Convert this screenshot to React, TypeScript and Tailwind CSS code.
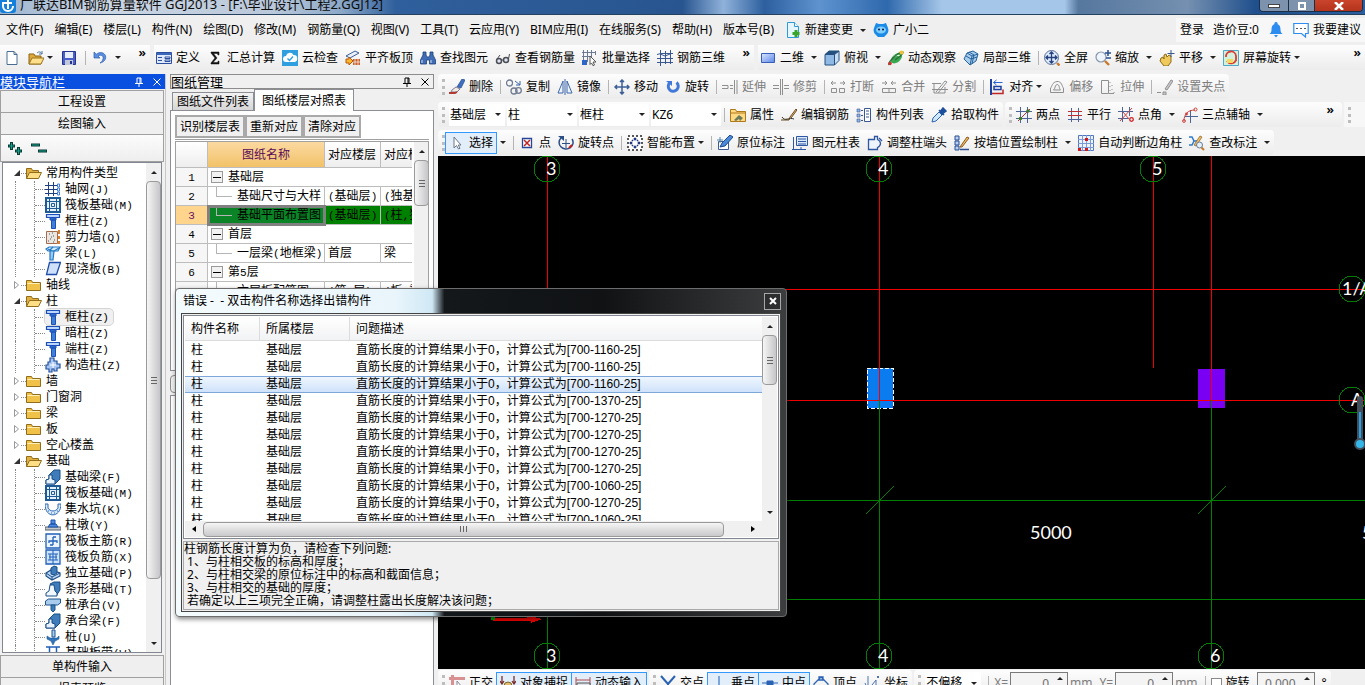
import type { ReactNode } from "react";

const NAVY = "#1f3f86";
const BLUE = "#3f7fd6";
const GREY = "#8f8f8f";

const icons: Record<string, ReactNode> = {
  file: <path d="M3 1.5h7l3 3v10H3zM10 1.5v3h3" fill="#fff" stroke="#4a6c92" />,
  open: (
    <>
      <path d="M1 14V4h5l1 2h6v8z" fill="#e0a93a" stroke="#8a6414" />
      <path d="M1 14l3-6h12l-3 6z" fill="#ffe08a" stroke="#9a7420" />
      <path d="M9 3c2-2 4-1 5 1m0-3v3h-3" fill="none" stroke="#4d74a0" />
    </>
  ),
  save: (
    <>
      <path d="M1.500 1.500h13v13h-13z" fill="#4a5fc8" stroke="#28358c" />
      <path d="M4 2h8v6H4z" fill="#e9eefc" />
      <path d="M4 10h8v5H4z" fill="#c3c9da" />
      <path d="M9 11h2v3H9z" fill="#28358c" />
    </>
  ),
  undo: <path d="M2 2v6h6L6 6c3-2 6 0 5 3-.4 1.700-1.500 3-3 4 4-.8 6.500-4 5.500-7C12.500 2.500 8 1.300 4.300 4.200z" fill="#5b8ee0" stroke="#2c5bb0" strokeWidth=".7" />,
  define: (
    <>
      <path d="M.5 2.500h15v11H.5z" fill="#dfe9fb" stroke="#2b4f9c" />
      <path d="M.5 3h15v2H.5z" fill="#3d66bd" />
      <path d="M2 7.500h4M2 10.500h4" stroke="#2b4f9c" />
      <path d="M9 7h5v1.500H9zM9 10h5v1.500H9z" fill="#fff" stroke="#2b4f9c" />
    </>
  ),
  sigma: <path d="M4 2h8v3h-1l-.6-1.500H6.500L10 8l-4 4.500h4.500L11.300 11H12v3H4v-1l4-5-4-5z" fill="#111" stroke="#111" strokeWidth=".5" />,
  cloud: (
    <>
      <path d="M0 0h16v16H0z" fill="#2f9fe0" />
      <path d="M4 12a3 3 0 010-6 4 4 0 017.500-1A3.500 3.500 0 0112 12z" fill="#fff" />
      <path d="M5.500 8.500l2 2 3.500-4" fill="none" stroke="#2f9fe0" strokeWidth="1.400" />
    </>
  ),
  slab: (
    <>
      <path d="M1 6l9-5 4 2-9 5z" fill="#e9f0fa" stroke="#3b5f9a" />
      <path d="M1 9h3V7l4 4-4 4v-2H1z" fill="#ffb52e" stroke="#b05a10" />
      <path d="M8 9h7v6H8z" fill="#c8602c" />
      <path d="M10 9v6M13 9v6M8 12h7" stroke="#fff" strokeWidth=".7" />
    </>
  ),
  find: (
    <>
      <path d="M3 2h3v3l1 2h2l1-2V2h3v3l2.500 5v4H9.500v-4h-3v4H.5v-4L3 5z" fill="#3f6cb4" stroke="#1d3f7c" strokeWidth=".8" />
      <path d="M2 10v3M11 10v3" stroke="#cfe0fa" />
    </>
  ),
  glasses: (
    <>
      <circle cx="4" cy="11" r="2.500" fill="#dce6f2" stroke="#4c4c55" strokeWidth="1.500" />
      <circle cx="11" cy="10" r="2.500" fill="#dce6f2" stroke="#4c4c55" strokeWidth="1.500" />
      <path d="M6.500 10h2M2 9l3-4M13.500 9l1-5" stroke="#4c4c55" fill="none" />
    </>
  ),
  batch: (
    <>
      <path d="M1.500 0v12M5.500 0v12M9.500 0v7M0 2.500h14M0 6.500h8M13.500 1v4" stroke="#6e7a90" fill="none" />
      <path d="M0 10h5v5H0z" fill="#2f64c8" />
      <path d="M8 6l6 6h-3l1.500 3-1.500.7L9.500 13 8 14.500z" fill="#fff" stroke="#555" />
    </>
  ),
  rebar3d: <path d="M3.500 0v16M8.500 1v13M13.500 0v14M0 4.500l4-1h12M0 8.500h16M0 12.500h16M3 4l5 2 5-2" stroke="#39588f" fill="none" />,
  rect: (
    <>
      <defs>
        <linearGradient id="rectFill" x1="0" x2="1" y2="1">
          <stop stopColor="#dbe6ff" />
          <stop offset="1" stopColor="#5b86e8" />
        </linearGradient>
      </defs>
      <path d="M1.500 3.500h13v9h-13z" fill="url(#rectFill)" stroke="#3660b8" />
    </>
  ),
  cube: (
    <>
      <path d="M1 4.500h9.500V15H1z" fill="#8fb8e4" stroke="#24507f" />
      <path d="M1 4.500L5 1h10l-4.500 3.500z" fill="#24507f" stroke="#24507f" />
      <path d="M10.500 4.500L15 1v9.500L10.500 15z" fill="#c9def4" stroke="#24507f" />
    </>
  ),
  orbit: (
    <>
      <path d="M3 12C2 8 7 2 12 3c2 1 3 3 1 6-2 4-8 6-10 3z" fill="#39a850" />
      <path d="M6 7c2-2 4-2 6-1" stroke="#d9ffd0" fill="none" strokeWidth="1.500" />
      <path d="M1 15C-1 12 12 1 15 2c1 2-5 6-8 8" stroke="#2d6b38" fill="none" strokeWidth="1.300" />
      <circle cx="13.500" cy="2.500" r="2" fill="#f2c230" />
      <circle cx="2" cy="13.500" r="1.800" fill="#c33" />
    </>
  ),
  local3d: (
    <>
      <path d="M1 9l3-6 6-2 5 3-2 7-6 4z" fill="#a9cdec" stroke="#27639c" />
      <path d="M4 3l5 3 6-2M9 6l-2 9M3 6l5 3 6-2M6 2l5 3-2 9" stroke="#27639c" fill="none" />
    </>
  ),
  full: (
    <>
      <circle cx="7.500" cy="7.500" r="7" fill="#dcebff" stroke="#5c6f92" />
      <path d="M7.500 2v11M2 7.500h11M5.500 4l2-2 2 2M5.500 11l2 2 2-2M4 5.500l-2 2 2 2M11 5.500l2 2-2 2" stroke="#24407c" fill="none" strokeWidth="1.300" />
      <path d="M13 13l2.500 2.500" stroke="#c67a2a" strokeWidth="2.400" />
    </>
  ),
  zoom: (
    <>
      <circle cx="6" cy="7" r="5" fill="#eef5ff" stroke="#8795ab" strokeWidth="1.200" />
      <path d="M10 11l4 4" stroke="#c67a2a" strokeWidth="2.400" />
      <path d="M13 0v6M10 3h6M11 8h5" stroke="#28508f" strokeWidth="1.500" />
    </>
  ),
  pan: (
    <>
      <path d="M2 8l2-1 1 2V5l2-1 1 3 2-2 2 1v6l-3 4H5l-4-5z" fill="#f0c95c" stroke="#8d6a1a" />
      <path d="M12 0v7M8.500 3.500h7" stroke="#39588f" />
    </>
  ),
  screenRotate: (
    <>
      <path d="M.5.5h15v15H.5z" fill="#d3f0dc" stroke="#4da9c8" />
      <path d="M3 7a5 5 0 0110-1v5M13 10a5 5 0 01-9 1" stroke="#dc3a34" strokeWidth="1.800" fill="none" />
      <path d="M4 9h6v4H4z" fill="#f4d860" />
    </>
  ),
  erase: (
    <>
      <path d="M8 8l5-8 3 1-4 8z" fill="#3f70c0" stroke="#234a8c" strokeWidth=".7" />
      <path d="M3 11l4-3 4 2-3 3H2z" fill="#f3ece0" stroke="#7c7a9a" />
      <path d="M0 14h6l2-1" stroke="#b23a2e" strokeWidth="1.800" fill="none" />
    </>
  ),
  copy: (
    <>
      <circle cx="3.500" cy="4" r="3" fill="none" stroke="#707c92" strokeWidth="1.300" />
      <circle cx="8" cy="12" r="3" fill="none" stroke="#707c92" strokeWidth="1.300" />
      <circle cx="12.500" cy="11.500" r="2.800" fill="none" stroke="#707c92" strokeWidth="1.300" />
      <path d="M9 2l5 4m0-4v4h-4" fill="none" stroke="#3a62a8" />
    </>
  ),
  mirror: <path d="M6 2v12H1zM10 2v12h5zM8 0v16" fill="#eef4ff" stroke="#3d66a8" />,
  move: <path d="M8 1v14M1 8h14M6 3l2-2 2 2M6 13l2 2 2-2M3 6L1 8l2 2M13 6l2 2-2 2" fill="none" stroke="#3c5f96" strokeWidth="1.500" />,
  rotate: (
    <>
      <path d="M4.500 4a5 5 0 107-.5" fill="none" stroke="#4279d8" strokeWidth="3" />
      <path d="M1 2h6v5z" fill="#4279d8" />
    </>
  ),
  extend: <path d="M0 6.500h6v3H0M8 6.500h3M8 9.500h3M12.500 1v14M15 1v14" stroke={GREY} fill="none" />,
  trim: <path d="M0 6.500h6M0 9.500h6M7.500 0v16M9.500 0v16M11 6.500h5M11 9.500h5" stroke={GREY} fill="none" />,
  breakIt: <path d="M1 4h5M1 4l2-2M1 4l2 2M10 4h5l-2-2M15 4l-2 2M1.500 9.500h5v4h-5zM9.500 9.500h5v4h-5z" stroke={GREY} fill="none" />,
  join: <path d="M1 4h5L4 2m2 2L4 6M15 4h-5l2-2m-2 2l2 2M1.500 9.500h13v4h-13zM8 10v3" stroke={GREY} fill="none" />,
  split: <path d="M0 4.500h9M0 10.500h16M2 4v10h11V8M4 13l9-11 2 1-9 11" stroke={GREY} fill="none" />,
  align: (
    <>
      <path d="M1 0h2v16H1z" fill="#1c3fa0" />
      <path d="M4.500 3.500h9M4.500 3.500l3-2.500M4.500 3.500l3 2.500" stroke="#2b62d8" fill="none" />
      <path d="M5 7.500h7v3H5z" fill="#fff" stroke="#1c3fa0" strokeWidth="1.500" />
      <path d="M3 14.500h11v-4" stroke="#c02424" strokeWidth="1.500" fill="none" />
    </>
  ),
  offset: <path d="M1.500 13.500V9C3 8 3 3 8 2.500S13 8 14.500 9v4.500zM4.500 11c2-1 1-5 3.500-5.500S10 10 11.500 11z" stroke={GREY} fill="none" />,
  stretch: <path d="M1.500 1.500h7v13h-7zM10 3v1M10 7v1M10 11v1M12 6v1M12 10v1M14 13v1M9 14.500h5" stroke={GREY} fill="none" />,
  grip: <path d="M0 13.500h4M6 13h3v3H6zM8 10l6-9 2 1-6 9z" stroke={GREY} fill="#c9c9c9" />,
  props: (
    <>
      <path d="M.5 2.500h5l1 2h9v10H.5z" fill="#ffd984" stroke="#b07818" />
      <path d="M.5 6h15" stroke="#b07818" />
      <path d="M4 13l5-5 4 3-3 3-1-2-3 2z" fill="#6a7a5a" />
    </>
  ),
  pencil: (
    <>
      <path d="M0 13h8l1-3 6-8 1 1-6 8" stroke="#6a4b2a" fill="#f0c060" />
      <path d="M1 10c3 5 7 0 12 2" stroke="#333" fill="none" />
    </>
  ),
  list: (
    <>
      <path d="M8.500 1.500h6v13h-6z" fill="#fff" stroke="#39588f" />
      <path d="M10 4h3M10 7h3M10 10h3" stroke="#39588f" />
      <path d="M1 2h3v3H1zM1 7h3v3H1zM1 12h3v3H1z" fill="#8fb4e8" stroke="#39588f" strokeWidth=".6" />
      <path d="M5 3.500h2M5 8.500h2M5 13.500h2" stroke="#39588f" />
    </>
  ),
  picker: (
    <>
      <path d="M1 15l1-4 6-6 3 3-6 6z" fill="#cfe6ff" stroke="#2d66b0" />
      <path d="M8 3l5 5M9 5l3-4 3 3-4 3z" fill="#1e4f9c" stroke="#1e4f9c" strokeWidth="1.500" />
    </>
  ),
  twoPoint: (
    <>
      <path d="M0 4.500h16M0 11.500h16M4.500 0v16M11.500 0v16" stroke="#4d6498" />
      <path d="M2 14L14 2" stroke="#c03030" />
      <circle cx="4.500" cy="11.500" r="1.800" fill="#3a7a2a" />
      <circle cx="12" cy="4" r="1.800" fill="#3a7a2a" />
    </>
  ),
  parallel: (
    <>
      <path d="M4.500 1v14M11.500 1v14M1 12.500h14" stroke="#4d6498" />
      <path d="M1 4.500h14M1 8.500h14" stroke="#c03030" />
    </>
  ),
  angle: (
    <>
      <path d="M0 4.500h15M0 11.500h10M4.500 0v15M11.500 0v9" stroke="#4d6498" />
      <path d="M2 14L14 1M5 5l6 7" stroke="#d04040" />
      <circle cx="13.500" cy="12.500" r="1.800" fill="none" stroke="#d02020" strokeWidth="1.300" />
    </>
  ),
  arc: (
    <>
      <path d="M8.500 3v13M3 9.500h13" stroke="#4d6498" />
      <path d="M2 14C2 7 6 3 13 3" stroke="#d04040" fill="none" />
      <circle cx="2" cy="14" r="1.400" fill="none" stroke="#d04040" />
      <circle cx="13.500" cy="2.500" r="1.500" fill="none" stroke="#d04040" />
      <circle cx="4.500" cy="7" r="1.400" fill="#d04040" />
    </>
  ),
  cursor: <path d="M5 2v11l2.500-2.500L9.500 14l1.500-.7L9.300 10H12z" fill="#fff" stroke="#6a7788" />,
  point: (
    <>
      <path d="M3.500 3.500h9v9h-9z" fill="#fff" stroke="#26469a" strokeWidth="1.300" />
      <path d="M5 5l6 6M11 5l-6 6" stroke="#c02020" strokeWidth="1.500" />
    </>
  ),
  rotPoint: (
    <>
      <path d="M3 3a7 6.500 0 1011 1" fill="none" stroke="#2c4f86" strokeWidth="1.500" />
      <path d="M0 1l6 0v5z" fill="#2c4f86" />
      <path d="M8 4v9M4 8.500h8" stroke="#2c4f86" />
      <path d="M11 13l3-3" stroke="#c02020" strokeWidth="2" />
    </>
  ),
  smart: (
    <>
      <path d="M1 1h14v14H1z" fill="#fff" stroke="#222" strokeDasharray="2 2" strokeWidth="1.500" />
      <path d="M5 5h1v1H5zM10 5h1v1h-1zM5 10h1v1H5zM10 10h1v1h-1zM7 3h2v2H7zM7 11h2v2H7zM3 7h2v2H3zM11 7h2v2h-2z" fill="#223b80" stroke="#223b80" strokeWidth=".6" />
    </>
  ),
  mark: (
    <>
      <path d="M1.500 6.500h10v8h-10z" fill="#fff" stroke="#3c5c94" />
      <path d="M3 12l2-4 8-8 3 2-8 9z" fill="#4a8ad8" stroke="#1f4a8c" />
      <path d="M0 5h6M3 2v6" stroke="#58a" />
    </>
  ),
  chart: (
    <>
      <path d="M4.500 1.500h11v9h-11z" fill="#dce9fb" stroke="#2f56a0" />
      <path d="M6 4h8M6 6.500h8M6 9h8" stroke="#2f56a0" />
      <path d="M1.500 2v12M0 14.500h14M9 12v3" stroke="#2f56a0" />
    </>
  ),
  adjust: <path d="M1.500 4.500h6v-3h3v3c4 2 4 6 0 8v2h-9zM12 3l3 3" fill="#eef4ff" stroke="#2f56a0" strokeWidth="1.300" />,
  wall: (
    <>
      <path d="M1 1h4v4H1zM1 6h4v4H1zM1 11h4v4H1z" fill="#b8d0f4" stroke="#2b4f90" />
      <path d="M6 14.500h9" stroke="#2b4f90" strokeWidth="1.500" />
      <path d="M6 12l7-10 2 1-7 9z" fill="#f0c060" stroke="#8a5a20" />
    </>
  ),
  corner: (
    <>
      <path d="M.5.5h15v15H.5z" fill="#eef4ff" stroke="#5076c0" />
      <path d="M4.500 0v16M8.500 0v16M12.500 0v16M0 4.500h16M0 8.500h16M0 12.500h16" stroke="#7c9ad4" />
      <path d="M7 3h3v3H7zM0 13h3v3H0zM7 13h3v3H7z" fill="#d01818" />
    </>
  ),
  review: (
    <>
      <path d="M0 2h3l2 4-2 4H0M4 6h5" stroke="#2f7acc" strokeWidth="1.500" fill="none" />
      <path d="M5 10l6-9 2 1-6 9z" fill="#f0c060" stroke="#8a5a20" strokeWidth=".7" />
      <circle cx="10.500" cy="10" r="3" fill="#e5f0ff" stroke="#6a7a90" />
      <path d="M12.500 12.500L15 15" stroke="#c67a2a" strokeWidth="2" />
    </>
  ),
  newChange: (
    <>
      <path d="M2.500.5h7l4 4v11h-11z" fill="#e6f6ff" stroke="#2d9bd8" />
      <path d="M9.500.5v4h4" fill="#fff" stroke="#2d9bd8" />
      <path d="M11 8v7M7.500 11.500h7" stroke="#37a52c" strokeWidth="3" />
    </>
  ),
  mascot: (
    <>
      <path d="M1 6l2-5 3 1h4l3-1 2 5c1 2 0 5-1 6l-3 3H5l-3-3C1 11 0 8 1 6z" fill="#1c8be8" />
      <ellipse cx="8" cy="8" rx="5" ry="3.500" fill="#7fd0ff" />
      <circle cx="6" cy="7.500" r="1" fill="#114" />
      <circle cx="10" cy="7.500" r="1" fill="#114" />
    </>
  ),
  bell: <path d="M8 0a1.500 1.500 0 011.400 2C12 3 12.500 5 12.500 8c0 2 1 3 2 4H1.500c1-1 2-2 2-4 0-3 .5-5 3-6A1.500 1.500 0 018 0zM6 13h4l-2 2.500z" fill="#2d8cf0" />,
  chat: (
    <>
      <path d="M.8 1.500h14.400v10h-2.700v3.500l-4-3.500H.8z" fill="#fff" stroke="#2d8cf0" strokeWidth="1.200" />
      <path d="M3 6.500h2M7 6.500h2M11 6.500h2" stroke="#555" />
    </>
  ),
  folder: (
    <>
      <path d="M.5 13.500v-10h5l1 2h8v8z" fill="#f1c24a" stroke="#8f6d1c" />
      <path d="M1.500 6.500h12" stroke="#fff0b8" />
    </>
  ),
  folderOpen: (
    <>
      <path d="M.5 13.500v-10h5l1 2h6v2" fill="#e2b040" stroke="#8f6d1c" />
      <path d="M.5 13.500l3-6h12l-3 6z" fill="#ffdf86" stroke="#8f6d1c" />
    </>
  ),
  axisGrid: (
    <>
      <path d="M3.500 1v14M8.500 1v14M0 4.500h12M0 8.500h12M0 12.500h12" stroke={NAVY} />
      <path d="M12.500 3h2v3h-2zM12.500 7h2v3h-2zM12.500 11h2v3h-2z" fill="#fff" stroke={BLUE} />
    </>
  ),
  raft: (
    <>
      <path d="M1 1h14v14H1z" fill="#e4f0fb" stroke="#1d5a96" strokeWidth="2" />
      <path d="M4.500 1v14M11.500 1v14M1 4.500h14M1 11.500h14M6.500 6.500h3v3h-3z" fill="none" stroke="#1d5a96" />
    </>
  ),
  column: (
    <>
      <path d="M1.500 1.500h13v3h-13z" fill="#bcd6ff" stroke="#1c50b8" strokeWidth="1.200" />
      <path d="M5 5h6v2H5zM6.500 7h4v8.500h-4z" fill={BLUE} stroke="#1c50b8" />
    </>
  ),
  shear: (
    <>
      <path d="M1.500 2.500h11v12h-11z" fill="#e9e6e2" stroke="#a56a4a" />
      <path d="M4 5h1M8 7h1M5 10h1M9 11h1M7 4h1M3 12h1M6 8h1M8 13h1" stroke="#555" />
      <path d="M14 1v4M14 7v3M14 12v3" stroke="#d98030" strokeWidth="2" />
    </>
  ),
  beam: (
    <>
      <path d="M1 4l3-2h11l-2 4H3z" fill="#d5ecff" stroke="#2378c4" strokeWidth="1.200" />
      <path d="M5 6h4l-1 9H5zM9 6l5-3M3 4l4 2M8 2L5 5" fill="#9accf4" stroke="#2378c4" strokeWidth="1.200" />
    </>
  ),
  plate: <path d="M4.500 1.500h11l-4 12H1.500z" fill="#cfe0fb" stroke="#1f4ea8" strokeWidth="1.300" />,
  gear: (
    <>
      <path d="M5 1h4v3h3v3h3v4h-3v3H9v-2H7v3H4v-3H1V8h2V5h2z" fill="#a9c6f2" stroke="#23509c" strokeWidth="1.200" />
      <path d="M8 5v6M5 8h6" stroke="#fff" />
    </>
  ),
  footBeam: (
    <>
      <path d="M1 15v-4l3-1V6l5-5h6v9l-5 5z" fill="#3e7cba" stroke="#1a4f86" />
      <path d="M1 15v-4l3-1V6h3v4l3 1v4z" fill="#e5f1ff" stroke="#1a4f86" />
    </>
  ),
  pit: (
    <>
      <path d="M0 3h3v4c2 4 8 4 10 0V3h3c0 14-16 15-16 0z" fill="#d7eaff" stroke="#2c69b0" />
      <path d="M3 10h1M6 12h1M9 12h1M12 10h1" stroke="#2c69b0" />
    </>
  ),
  pier: (
    <>
      <path d="M0 10h16v3H0z" fill="#c4c8ce" stroke="#56606c" />
      <path d="M3 10l2-3h6l2 3zM6 3h4v4H6z" fill="#4d8be0" stroke="#1c50a8" />
    </>
  ),
  mainBar: (
    <>
      <path d="M1 1h14v14H1z" fill="#eaf3ff" stroke="#2160b8" strokeWidth="1.300" />
      <path d="M8 4v8M4 10V8h8v2M8 4h3M5 12h3" fill="none" stroke="#2160b8" strokeWidth="1.300" />
    </>
  ),
  negBar: (
    <>
      <path d="M1 1h14v14H1z" fill="#cfe2fb" stroke="#2160b8" strokeWidth="1.300" />
      <path d="M8 1v14M3 5h10M3 11h10M5 5v6M11 5v6M4 8h8" fill="none" stroke="#2160b8" />
    </>
  ),
  pad: (
    <>
      <path d="M1 8l5-3 9 3v3l-8 4-6-4z" fill="#bcd8f4" stroke="#1d4f88" strokeWidth="1.200" />
      <path d="M1 8l6 4 8-4M7 12v3" fill="none" stroke="#1d4f88" />
      <path d="M6 3l3-2 3 1v6l-3 2-3-1z" fill="#3e7cba" stroke="#1d4f88" />
    </>
  ),
  strip: (
    <>
      <path d="M5 3l4-2h6v8l-4 6z" fill="#3e7cba" stroke="#1a4f86" />
      <path d="M1 15v-3l3-2 1-6h4l1 6 2 2v3z" fill="#f2f8ff" stroke="#1a4f86" />
    </>
  ),
  cap: (
    <>
      <path d="M.5 4l3-2h12v4l-3 2H.5z" fill="#a9ccec" stroke="#1d5590" />
      <path d="M6 8h4v5l-2 2-2-2z" fill="#3e7cba" stroke="#1d5590" />
    </>
  ),
  pile: (
    <>
      <path d="M7 1h3v7H7z" fill="#a9ccec" stroke="#1d5590" />
      <path d="M2 7l3 2h7l2-2v3l-4 2-2 4-2-4-4-2z" fill="#2f74bc" stroke="#1d5590" strokeWidth=".6" />
    </>
  ),
  band: <path d="M1 2h14M1 8h14M4.500 2v12M11.500 2v12" fill="none" stroke="#2160b8" strokeWidth="1.500" />,
  ortho: (
    <>
      <path d="M3.500 0v15M0 3.500h16" stroke="#d99090" strokeWidth="3" />
      <path d="M8 6v8l5-2z" fill="#fff" stroke="#889" />
    </>
  ),
  snap: (
    <>
      <path d="M2 1v7M14 1v7M0 6l2 3 2-3M12 6l2 3 2-3" stroke="#7a2e2e" fill="none" strokeWidth="1.300" />
      <circle cx="8" cy="11" r="4" fill="#e0bd70" stroke="#7f6a2a" />
    </>
  ),
  dyn: (
    <>
      <path d="M1 2v13M1 5h14M15 2v13" stroke="#b04a4a" />
      <path d="M2 8h13v7H2z" fill="#dfe4ea" stroke="#555" />
    </>
  ),
  cross: <path d="M1 1l7 8 7-8M8 9v7" stroke="#2a62b4" fill="none" strokeWidth="2" />,
  perp: <path d="M8 1v13M1 14h14" stroke="#7ba6dc" fill="none" strokeWidth="2" />,
  mid: <path d="M0 8h16M5 6h6v5H5z" stroke="#2a62b4" fill="#2a62b4" />,
  vertex: <path d="M1 14V9l7-7 7 7v5M6 2h4v3H6z" stroke="#2a62b4" fill="none" strokeWidth="1.300" />,
  coord: <path d="M1 8l3 7M4 1v14l8-10v10M13 1l2 2M15 1l-2 2" stroke="#4d74b8" fill="none" />,
};

function Icon({ name }: { name: string }) {
  return (
    <svg viewBox="0 0 16 16" className="size-4 shrink-0" aria-hidden="true">
      {icons[name]}
    </svg>
  );
}

function Triangle({ up = false }: { up?: boolean }) {
  return (
    <svg viewBox="0 0 6 3" className="h-[3px] w-1.5 shrink-0" aria-hidden="true">
      <path d={up ? "M0 3h6L3 0z" : "M0 0h6L3 3z"} fill="#222" />
    </svg>
  );
}

type ToolProps = {
  icon?: string;
  children?: ReactNode;
  arrow?: boolean;
  tight?: boolean;
  disabled?: boolean;
  active?: boolean;
  label?: string;
};

function Tool({ icon, children, arrow, tight, disabled, active, label }: ToolProps) {
  return (
    <span className={tight ? "flex shrink-0 items-center gap-[3px]" : "flex shrink-0 items-center gap-[7px]"}>
      <button
        type="button"
        aria-label={label}
        disabled={disabled}
        className={
          active
            ? "-mx-1 flex h-[22px] items-center gap-1 whitespace-nowrap border border-[#3399ff] bg-[#e3eefb] px-[3px]"
            : "flex h-[22px] items-center gap-1 whitespace-nowrap disabled:text-[#7d7d7d]"
        }
      >
        {icon && <Icon name={icon} />}
        {children}
      </button>
      {arrow && <Triangle />}
    </span>
  );
}

function Sep() {
  return <span className="-mr-0.5 h-[14px] w-px shrink-0 bg-[#b4b4b4]" />;
}

function Grip() {
  return <span className="-mr-[3px] h-4 w-[3px] shrink-0 border-l-[3px] border-dotted border-[#bdbdbd]" />;
}

function More() {
  return <span className="ml-auto self-start pr-1 text-[13px] leading-[14px] font-semibold">»</span>;
}

function Group({ children, grow }: { children: ReactNode; grow?: boolean }) {
  return (
    <div
      className={
        grow
          ? "flex h-full min-w-0 flex-1 items-center gap-[7px] rounded-sm bg-linear-to-b from-[#fdfdfd] to-[#ececec] px-1"
          : "flex h-full shrink-0 items-center gap-[7px] rounded-sm bg-linear-to-b from-[#fdfdfd] to-[#ececec] px-1"
      }
    >
      {children}
    </div>
  );
}

function Combo({ value, label, first }: { value: string; label: string; first?: boolean }) {
  return (
    <span className={first ? "flex h-[22px] w-14 items-center bg-white pr-1" : "flex h-[22px] w-[70px] items-center bg-white pr-1"}>
      <select aria-label={label} className="min-w-0 flex-1 appearance-none bg-transparent pl-px outline-none">
        <option>{value}</option>
      </select>
      <Triangle />
    </span>
  );
}

// Half-width characters are set in a monospace face beside the 12px ideographs.
function Mixed({ text }: { text: string }) {
  return (
    <>
      {text.split(/([\x20-\x7e]+)/).map((part, i) =>
        i % 2 ? (
          <span key={i} className="text-[11px] leading-none [font-family:'Liberation_Mono',monospace]">
            {part}
          </span>
        ) : (
          part
        ),
      )}
    </>
  );
}

const menus = [
  "文件(F)", "编辑(E)", "楼层(L)", "构件(N)", "绘图(D)", "修改(M)", "钢筋量(Q)", "视图(V)",
  "工具(T)", "云应用(Y)", "BIM应用(I)", "在线服务(S)", "帮助(H)", "版本号(B)",
];

function TitleBar() {
  return (
    <header className="flex h-[15px] shrink-0 items-start overflow-hidden border-b border-[#26405f] bg-[linear-gradient(90deg,#9db4cf_0%,#cbd6e3_8%,#b9c8da_20%,#8ca8c8_25%,#2f5f9c_29%,#28558f_50%,#8fb2da_53%,#2d5f9f_56%,#5e93cf_60%,#2f69ad_65%,#a5c6e8_69%,#a5c6e8_78%,#56779e_79%,#7590b0_87%,#1f4f8c_92%,#2b5f9f_100%)]">
      <div className="-mt-1.5 flex h-5 flex-1 items-center gap-1">
        <svg viewBox="0 0 16 20" className="h-5 w-4">
          <rect y="1" width="16" height="18" rx="3" fill="#1580dc" />
          <path d="M3 8v4a4 4 0 0010 0M8 3v12M4 9h8" stroke="#fff" strokeWidth="2" fill="none" />
        </svg>
        <h1 className="text-[13px] whitespace-nowrap text-[#0d0d0d]">广联达BIM钢筋算量软件 GGJ2013 - [F:\毕业设计\工程2.GGJ12]</h1>
      </div>
      <div className="mr-0.5 flex h-3 overflow-hidden rounded-b border border-t-0 border-[#1d2d44] text-white">
        <button type="button" aria-label="最小化" className="flex w-[29px] items-center justify-center border-r border-[#1d2d44] bg-[#7d93ad]">
          <span className="h-1 w-3 border border-[#444] bg-white" />
        </button>
        <button type="button" aria-label="还原" className="flex w-[26px] items-center justify-center border-r border-[#1d2d44] bg-[#7d93ad]">
          <span className="size-2 border-2 border-white" />
        </button>
        <button type="button" aria-label="关闭" className="flex w-[47px] items-center justify-center bg-linear-to-b from-[#c9442a] to-[#b5331c]">
          <svg viewBox="0 0 12 8" className="h-2 w-3">
            <path d="M2 0l8 8M10 0L2 8" stroke="#fff" strokeWidth="2.500" />
          </svg>
        </button>
      </div>
    </header>
  );
}

function MenuBar() {
  return (
    <nav className="flex h-[30px] shrink-0 items-center justify-between bg-[#efefef] pl-1.5">
      <div className="flex items-center gap-[11px]">
        {menus.map((m) => (
          <button key={m} type="button" className="whitespace-nowrap">
            {m}
          </button>
        ))}
        <div className="flex items-center gap-[7px]">
          <Tool icon="newChange" arrow>新建变更</Tool>
          <Tool icon="mascot">广小二</Tool>
        </div>
      </div>
      <div className="flex h-6 items-center gap-[9px] bg-[#f7f7f7] px-1">
        <button type="button" className="whitespace-nowrap">登录</button>
        <span className="whitespace-nowrap">造价豆:0</span>
        <Tool icon="bell" label="消息" />
        <Tool icon="chat">我要建议</Tool>
      </div>
    </nav>
  );
}

function MainToolbar() {
  return (
    <div className="flex h-7 shrink-0 gap-1 bg-[#f0f0f0] pb-[3px]">
      <div className="flex w-[150px] shrink-0 items-center gap-2 bg-linear-to-b from-[#fdfdfd] to-[#ececec] pl-1">
        <Tool icon="file" label="新建" />
        <Tool icon="open" label="打开" arrow tight />
        <Tool icon="save" label="保存" />
        <Sep />
        <Tool icon="undo" label="撤销" arrow />
        <More />
      </div>
      <div className="flex w-[600px] shrink-0 items-center gap-[7px] bg-linear-to-b from-[#fdfdfd] to-[#ececec] pl-0.5">
        <Tool icon="define">定义</Tool>
        <Tool icon="sigma">汇总计算</Tool>
        <Tool icon="cloud">云检查</Tool>
        <Tool icon="slab">平齐板顶</Tool>
        <Tool icon="find">查找图元</Tool>
        <Tool icon="glasses">查看钢筋量</Tool>
        <Tool icon="batch">批量选择</Tool>
        <Tool icon="rebar3d">钢筋三维</Tool>
        <More />
      </div>
      <div className="flex min-w-0 flex-1 items-center gap-[7px] bg-linear-to-b from-[#fdfdfd] to-[#ececec] pl-0.5">
        <Tool icon="rect" arrow>二维</Tool>
        <Tool icon="cube" arrow>俯视</Tool>
        <Tool icon="orbit">动态观察</Tool>
        <Tool icon="local3d">局部三维</Tool>
        <Sep />
        <Tool icon="full">全屏</Tool>
        <Tool icon="zoom" arrow>缩放</Tool>
        <Tool icon="pan" arrow>平移</Tool>
        <Tool icon="screenRotate" arrow tight>屏幕旋转</Tool>
        <More />
      </div>
    </div>
  );
}

type Node = { name: string; items?: [string, string][]; selected?: number };

const tree: Node[] = [
  {
    name: "常用构件类型",
    items: [["axisGrid", "轴网(J)"], ["raft", "筏板基础(M)"], ["column", "框柱(Z)"], ["shear", "剪力墙(Q)"], ["beam", "梁(L)"], ["plate", "现浇板(B)"]],
  },
  { name: "轴线" },
  { name: "柱", selected: 0, items: [["column", "框柱(Z)"], ["column", "暗柱(Z)"], ["column", "端柱(Z)"], ["gear", "构造柱(Z)"]] },
  { name: "墙" },
  { name: "门窗洞" },
  { name: "梁" },
  { name: "板" },
  { name: "空心楼盖" },
  {
    name: "基础",
    items: [
      ["footBeam", "基础梁(F)"], ["raft", "筏板基础(M)"], ["pit", "集水坑(K)"], ["pier", "柱墩(Y)"],
      ["mainBar", "筏板主筋(R)"], ["negBar", "筏板负筋(X)"], ["pad", "独立基础(P)"], ["strip", "条形基础(T)"],
      ["cap", "桩承台(V)"], ["footBeam", "承台梁(F)"], ["pile", "桩(U)"], ["band", "基础板带(W)"],
    ],
  },
];

function TreeNode({ node }: { node: Node }) {
  return (
    <li>
      <div className="flex h-4 items-center pl-[10px]">
        <svg viewBox="0 0 8 8" className="size-2">
          {node.items ? <path d="M7 1v6H1z" fill="#333" /> : <path d="M1.500.5v7l4-3.500z" fill="#fff" stroke="#999" />}
        </svg>
        <span className="w-[5px] border-t border-dotted border-[#888]" />
        <Icon name={node.items ? "folderOpen" : "folder"} />
        <span className="pl-1">{node.name}</span>
      </div>
      {node.items && (
        <ul>
          {node.items.map(([icon, text], i) => (
            <li key={text + i} className="flex h-4 items-center pl-3">
              <span className="w-[19px] self-stretch border-l border-dotted border-[#888]" />
              <span className="flex w-[11px] items-center self-stretch border-l border-dotted border-[#888]">
                <span className="w-full border-t border-dotted border-[#888]" />
              </span>
              <span
                className={
                  node.selected === i
                    ? "flex h-4 items-center gap-1 rounded-sm bg-[#f0f0f0] pr-1 outline outline-[#d5d5d5]"
                    : "flex h-4 items-center gap-1 whitespace-nowrap"
                }
              >
                <Icon name={icon} />
                <span><Mixed text={text} /></span>
              </span>
            </li>
          ))}
        </ul>
      )}
    </li>
  );
}

function VScroll({ thumb }: { thumb: string }) {
  return (
    <div className="flex w-[15px] shrink-0 flex-col items-center bg-[#f0f0f0]">
      <span className="flex h-[18px] shrink-0 items-center"><Triangle up /></span>
      <span className={`${thumb} flex w-full items-center justify-center rounded-sm border border-[#9a9a9a] bg-linear-to-r from-[#f6f6f6] to-[#c6c6c9]`}>
        <span className="h-[7px] w-1.5 bg-[repeating-linear-gradient(#666_0_1px,transparent_1px_3px)]" />
      </span>
      <span className="mt-auto flex h-[17px] shrink-0 items-center"><Triangle /></span>
    </div>
  );
}

function PanelTools() {
  return (
    <span className="flex items-center gap-[10px] pr-1">
      <button type="button" aria-label="自动隐藏">
        <svg viewBox="0 0 8 10" className="h-[10px] w-2">
          <path d="M2 1h4v5M2 1v5M5 1v5M0 6.500h8M4 6v4" stroke="currentColor" fill="none" />
        </svg>
      </button>
      <button type="button" aria-label="关闭面板">
        <svg viewBox="0 0 8 8" className="size-2">
          <path d="M.5.5l7 7M7.500.5l-7 7" stroke="currentColor" />
        </svg>
      </button>
    </span>
  );
}

function NavPanel() {
  const bar = "h-[22px] shrink-0 border-t border-[#a0a0a0] bg-[#efefef] border-x";
  return (
    <aside className="flex w-[166px] shrink-0 flex-col border-r border-[#c8c8c8] bg-[#f0f0f0]">
      <div className="flex h-[15px] shrink-0 items-center justify-between bg-[#0a50e0] text-[13px] text-white">
        <h2>模块导航栏</h2>
        <PanelTools />
      </div>
      <div className="mr-px flex min-h-0 flex-1 flex-col pt-px">
        <button type="button" className={bar}>工程设置</button>
        <button type="button" className={bar}>绘图输入</button>
        <div className="flex h-7 shrink-0 items-center gap-2 border border-[#a0a0a0] bg-linear-to-b from-[#fbfbfb] to-[#eee] pl-1.5">
          <button type="button" aria-label="全部展开">
            <svg viewBox="0 0 16 14" className="h-[14px] w-4">
              <path d="M1 5h7M4.500 1v8M8 10h7M11.500 6v8" stroke="#0b3b35" strokeWidth="3" />
              <path d="M2 5h5M4.500 2v6M9 10h5M11.500 7v6" stroke="#14a08c" />
            </svg>
          </button>
          <button type="button" aria-label="全部折叠">
            <svg viewBox="0 0 16 14" className="h-[14px] w-4">
              <path d="M0 4h9M7 10h9" stroke="#0b3b35" strokeWidth="3" />
              <path d="M1 4h7M8 10h7" stroke="#14a08c" />
            </svg>
          </button>
        </div>
        <div className="mx-0.5 flex min-h-0 flex-1 justify-between overflow-hidden border border-[#828790] bg-white">
          <ul className="min-w-0 flex-1 overflow-hidden pt-0.5 leading-4">
            {tree.map((n, i) => (
              <TreeNode key={i} node={n} />
            ))}
          </ul>
          <VScroll thumb="h-[398px]" />
        </div>
        <button type="button" className={`mt-0.5 ${bar}`}>单构件输入</button>
        <button type="button" className="h-2 shrink-0 overflow-hidden border-x border-t border-[#a0a0a0] leading-[22px]">报表预览</button>
      </div>
    </aside>
  );
}

type Sheet = { name: string; floor?: string; kind?: string };

const sheets: Sheet[] = [
  { name: "基础层" },
  { name: "基础尺寸与大样", floor: "(基础层)", kind: "(独基" },
  { name: "基础平面布置图", floor: "(基础层)", kind: "(柱,独" },
  { name: "首层" },
  { name: "一层梁(地框梁)", floor: "首层", kind: "梁" },
  { name: "第5层" },
  { name: "六层板配筋图", floor: "(第5层)", kind: "(板,梁" },
];

function SheetTable() {
  const cell = "overflow-hidden border-r border-b border-[#bdbdbd] pl-[3px] whitespace-nowrap";
  return (
    <table className="w-[236px] table-fixed border-separate border-spacing-0 self-start text-left leading-[18px]">
      <colgroup>
        <col className="w-8" />
        <col className="w-[117px]" />
        <col className="w-14" />
        <col className="w-[31px]" />
      </colgroup>
      <thead>
        <tr className="h-[26px] bg-linear-to-b from-white to-[#ededed]">
          <th className="border-r border-b border-[#bdbdbd]" />
          <th className="border-r border-b border-[#bdbdbd] bg-linear-to-b from-[#fbd9a0] to-[#f2c268] text-center font-normal text-[#5a0a5a]">图纸名称</th>
          <th className="border-r border-b border-[#bdbdbd] pl-[3px] font-normal whitespace-nowrap">对应楼层</th>
          <th className="overflow-hidden border-b border-[#bdbdbd] pl-[3px] font-normal whitespace-nowrap">对应构件</th>
        </tr>
      </thead>
      <tbody>
        {sheets.map((s, i) => {
          const on = i === 2;
          return (
            <tr key={i} className={on ? "h-[19px] bg-[#008000]" : "h-[19px]"}>
              <th className={on ? "border-r border-b border-[#bdbdbd] bg-[#ffd48c] text-center font-normal text-[#6a1060]" : "border-r border-b border-[#bdbdbd] bg-[#f6f6f6] text-center font-normal"}>
                <Mixed text={String(i + 1)} />
              </th>
              {s.floor ? (
                <>
                  <td className={on ? "overflow-hidden border-r border-b border-[#bdbdbd] bg-[#0a8426] whitespace-nowrap outline-3 -outline-offset-2 outline-[#808080]" : "overflow-hidden border-r border-b border-[#bdbdbd] whitespace-nowrap"}>
                    <span className="flex h-[18px] pl-2">
                      <span className="mr-[5px] h-[10px] w-4 shrink-0 border-b border-l border-[#b5b5b5]" />
                      <span><Mixed text={s.name} /></span>
                    </span>
                  </td>
                  <td className={cell}><Mixed text={s.floor} /></td>
                  <td className="overflow-hidden border-b border-[#bdbdbd] pl-[3px] whitespace-nowrap"><Mixed text={s.kind ?? ""} /></td>
                </>
              ) : (
                <td colSpan={3} className="border-b border-[#bdbdbd]">
                  <span className="flex h-[18px] items-center gap-[5px] pl-[3px]">
                    <span className="flex size-3 items-center justify-center border border-[#9a9a9a] bg-[#f2f2f2]">
                      <span className="h-px w-2 bg-black" />
                    </span>
                    <span><Mixed text={s.name} /></span>
                  </span>
                </td>
              )}
            </tr>
          );
        })}
      </tbody>
    </table>
  );
}

function DrawingPanel() {
  const button = "h-[23px] border-2 border-[#a9a9a9] bg-[#f0f0f0] px-[3px]";
  return (
    <aside className="flex w-[272px] shrink-0 flex-col bg-[#f0f0f0] px-1">
      <div className="flex h-[15px] shrink-0 items-center justify-between border border-[#8c8c8c] text-[13px]">
        <h2>图纸管理</h2>
        <PanelTools />
      </div>
      <div className="flex h-[21px] shrink-0 items-end pl-0.5">
        <button type="button" className="h-[18px] border border-b-0 border-[#8c8e94] bg-linear-to-b from-[#f2f2f2] to-[#d6d6d6] px-1 leading-4">图纸文件列表</button>
        <button type="button" className="relative -mb-px h-[22px] border border-b-0 border-[#8c8e94] bg-white px-[7px] leading-5">图纸楼层对照表</button>
      </div>
      <div className="flex h-[261px] shrink-0 flex-col border border-[#8c8e94] bg-white px-1 pt-1">
        <div className="flex shrink-0 border-b border-[#a0a0a0] pb-px">
          <button type="button" className={button}>识别楼层表</button>
          <button type="button" className={button}>重新对应</button>
          <button type="button" className={button}>清除对应</button>
        </div>
        <div className="mt-px flex min-h-0 flex-1 gap-0.5 overflow-hidden border border-[#a0a0a0]">
          <SheetTable />
          <VScroll thumb="h-[46px]" />
        </div>
      </div>
      <div className="mt-1 h-[18px] shrink-0 rounded-sm border border-[#8c8c8c]" />
      <div className="mt-0.5 flex-1 border-x border-t border-[#8c8e94] bg-white" />
    </aside>
  );
}

function EditToolbars() {
  return (
    <div className="flex shrink-0 flex-col gap-[3px] overflow-hidden pb-px">
      <div className="flex h-[25px]">
        <Group>
          <Grip />
          <Tool icon="erase">删除</Tool>
          <Sep />
          <Tool icon="copy">复制</Tool>
          <Tool icon="mirror">镜像</Tool>
          <Sep />
          <Tool icon="move">移动</Tool>
          <Tool icon="rotate">旋转</Tool>
          <Sep />
          <Tool icon="extend" disabled>延伸</Tool>
          <Tool icon="trim" disabled>修剪</Tool>
          <Sep />
          <Tool icon="breakIt" disabled>打断</Tool>
          <Tool icon="join" disabled>合并</Tool>
          <Tool icon="split" disabled>分割</Tool>
          <Sep />
          <Tool icon="align" arrow tight>对齐</Tool>
          <Tool icon="offset" disabled>偏移</Tool>
          <Tool icon="stretch" disabled>拉伸</Tool>
          <Sep />
          <Tool icon="grip" disabled>设置夹点</Tool>
        </Group>
      </div>
      <div className="flex h-[25px] gap-0.5">
        <Group>
          <Grip />
          <div className="-mr-1 flex gap-0.5">
            <Combo value="基础层" label="楼层" first />
            <Combo value="柱" label="构件类别" />
            <Combo value="框柱" label="构件类型" />
            <Combo value="KZ6" label="构件" />
          </div>
          <Sep />
          <Tool icon="props">属性</Tool>
          <Tool icon="pencil">编辑钢筋</Tool>
          <Tool icon="list">构件列表</Tool>
          <Tool icon="picker">拾取构件</Tool>
        </Group>
        <Group grow>
          <Grip />
          <Tool icon="twoPoint">两点</Tool>
          <Tool icon="parallel">平行</Tool>
          <Tool icon="angle" arrow>点角</Tool>
          <Tool icon="arc" arrow>三点辅轴</Tool>
          <More />
        </Group>
        <div className="flex w-[21px] shrink-0 items-center bg-[#f7f7f7] pl-1">
          <Grip />
        </div>
      </div>
      <div className="flex h-[25px]">
        <Group>
          <Grip />
          <Tool icon="cursor" active arrow>选择</Tool>
          <Sep />
          <Tool icon="point">点</Tool>
          <Tool icon="rotPoint">旋转点</Tool>
          <Sep />
          <Tool icon="smart" arrow tight>智能布置</Tool>
          <Sep />
          <Tool icon="mark">原位标注</Tool>
          <Tool icon="chart">图元柱表</Tool>
          <Tool icon="adjust">调整柱端头</Tool>
          <Tool icon="wall" arrow>按墙位置绘制柱</Tool>
          <Tool icon="corner">自动判断边角柱</Tool>
          <Tool icon="review" arrow>查改标注</Tool>
        </Group>
      </div>
    </div>
  );
}

const bubbles = [
  { x: 109, y: 13, t: "3" },
  { x: 441, y: 13, t: "4" },
  { x: 715, y: 13, t: "5" },
  { x: 109, y: 500, t: "3" },
  { x: 441, y: 500, t: "4" },
  { x: 773, y: 500, t: "6" },
  { x: 914, y: 133, t: "1/A" },
  { x: 914, y: 244, t: "A" },
];

function Drawing() {
  return (
    <div className="min-h-0 flex-1 overflow-hidden bg-black">
      <svg className="size-full" shapeRendering="crispEdges" fontFamily="Lato, 'Noto Sans', sans-serif" fontSize="18">
        <rect x="760" y="213" width="27" height="39" fill="#7a00f4" />
        <rect x="429" y="212" width="26" height="40" fill="#0a7cf0" stroke="#fff" strokeDasharray="4 2" />
        <g stroke="#f00000">
          <path d="M109.500 0v244M441.500 0v244M715.500 0v212M773.500 0v244" />
          <path d="M0 133.500h927M0 244.500h927" />
        </g>
        <path d="M109.500 244v269M441.500 244v269M773.500 244v269M0 344.500h927M0 443.500h927" stroke="#008000" />
        <path d="M428 358l28-28M760 358l28-28M96 358l28-28" stroke="#008000" />
        <path d="M55 462h34v-3l15 4-11 4v-2H55z" fill="#f00000" />
        <path d="M53 461h4v3h-4z" fill="#00a000" />
        {bubbles.map((b, i) => (
          <g key={i}>
            <circle cx={b.x} cy={b.y} r="13" fill="none" stroke="#008000" />
            <text x={b.t === "1/A" ? b.x - 10 : b.x - 1} y={b.y + 6} fill="#fff">
              {b.t}
            </text>
          </g>
        ))}
        <text x="592" y="383" fill="#fff">5000</text>
        <text x="924" y="383" fill="#fff">5000</text>
        <g shapeRendering="auto">
          <path d="M922 243v45" stroke="#41505c" strokeWidth="6" strokeLinecap="round" />
          <path d="M922 256v32" stroke="#2aa2e8" strokeWidth="2" />
          <circle cx="922" cy="288" r="5" fill="#35b6e8" stroke="#41505c" strokeWidth="2" />
        </g>
      </svg>
    </div>
  );
}

function NumberBox({ value, label }: { value: string; label: string }) {
  return (
    <span className="flex h-[22px] w-[58px] shrink-0 items-start border border-[#7a7a7a] bg-[#f4f4f4] pr-1 text-[#6d6d6d]">
      <input aria-label={label} defaultValue={value} className="h-full w-0 min-w-0 flex-1 bg-transparent pr-2 text-right outline-none" />
      <span className="flex pt-1"><Triangle up /></span>
    </span>
  );
}

function StatusBar() {
  return (
    <div className="h-4 shrink-0 overflow-hidden bg-[#f0f0f0]">
      <div className="flex h-[27px] gap-0.5 pt-px">
        <Group>
          <Grip />
          <Tool icon="ortho">正交</Tool>
          <Tool icon="snap" active>对象捕捉</Tool>
          <Tool icon="dyn" active>动态输入</Tool>
        </Group>
        <Group>
          <Grip />
          <Tool icon="cross">交点</Tool>
          <Tool icon="perp" active>垂点</Tool>
          <Tool icon="mid" active>中点</Tool>
          <Tool icon="vertex">顶点</Tool>
          <Tool icon="coord">坐标</Tool>
        </Group>
        <Group>
          <Grip />
          <Combo value="不偏移" label="偏移方式" first />
          <Sep />
          <span className="flex items-center gap-0.5 text-[#7d7d7d]">
            X=
            <NumberBox value="0" label="X" />
            mm
          </span>
          <span className="flex items-center gap-0.5 text-[#7d7d7d]">
            Y=
            <NumberBox value="0" label="Y" />
            mm
          </span>
          <Sep />
          <label className="flex items-center gap-1 whitespace-nowrap">
            <input type="checkbox" className="size-[11px] appearance-none border border-[#8a8a8a] bg-white" />
            旋转
          </label>
          <NumberBox value="0.000" label="角度" />
          °
        </Group>
      </div>
    </div>
  );
}

const formulas = [1160, 1160, 1160, 1370, 1270, 1270, 1270, 1270, 1060, 1270, 1060];

const hints = [
  " 1、与柱相交板的标高和厚度；",
  " 2、与柱相交梁的原位标注中的标高和截面信息；",
  " 3、与柱相交的基础的厚度；",
  " 若确定以上三项完全正确，请调整柱露出长度解决该问题；",
];

function ErrorDialog() {
  return (
    <section
      role="dialog"
      aria-label="错误"
      className="absolute top-[288px] left-[175px] flex h-[329px] w-[612px] flex-col rounded-sm border border-[#6d6d6d] bg-[linear-gradient(90deg,#f4fbfd_0%,#e9f5fb_36%,#cfe8f5_42%,#14181b_44%,#101214_70%,#3b3d3f_100%)] px-[5px] pb-1 shadow-[1px_2px_5px_rgba(0,0,0,0.5)]"
    >
      <div className="flex h-6 shrink-0 items-center justify-between pl-0.5">
        <h2 className="whitespace-pre">错误 -  - 双击构件名称选择出错构件</h2>
        <button type="button" aria-label="关闭" className="flex size-[17px] items-center justify-center border border-[#a8a8a8] bg-[#2c2e30]">
          <svg viewBox="0 0 8 8" className="size-2">
            <path d="M1 1l6 6M7 1L1 7" stroke="#fff" strokeWidth="2" />
          </svg>
        </button>
      </div>
      <div className="flex min-h-0 flex-1 flex-col border border-[#444] bg-[#f0f0f0] p-px">
        <div className="flex h-[224px] shrink-0 flex-col border border-[#828790] bg-white p-px">
          <div className="flex min-h-0 flex-1 overflow-hidden">
            <div className="min-w-0 flex-1 overflow-hidden [font-family:'Liberation_Sans','Noto_Sans_CJK_SC',sans-serif]">
              <table className="w-full table-fixed border-separate border-spacing-0 text-left">
                <colgroup>
                  <col className="w-[75px]" />
                  <col className="w-[90px]" />
                  <col />
                </colgroup>
                <thead>
                  <tr className="h-6 bg-linear-to-b from-white to-[#f1f2f4]">
                    <th className="border-r border-b border-[#dcdcdc] pl-1.5 font-normal">构件名称</th>
                    <th className="border-r border-b border-[#dcdcdc] pl-1.5 font-normal">所属楼层</th>
                    <th className="border-b border-[#dcdcdc] pl-1.5 font-normal">问题描述</th>
                  </tr>
                  <tr className="h-px" />
                </thead>
                <tbody>
                  {formulas.map((n, i) => {
                    const line = i === 2 ? "border-y border-[#7da7d9] bg-linear-to-b from-[#eff6fe] to-[#cfe2fa] pl-1.5 leading-[15px] whitespace-nowrap" : "pl-1.5 leading-[17px] whitespace-nowrap";
                    return (
                      <tr key={i} className="h-[17px]">
                        <td className={line}>柱</td>
                        <td className={line}>基础层</td>
                        <td className={line}>直筋长度的计算结果小于0，计算公式为[700-{n}-25]</td>
                      </tr>
                    );
                  })}
                </tbody>
              </table>
            </div>
            <VScroll thumb="h-[50px]" />
          </div>
          <div className="flex h-4 shrink-0 items-center bg-[#f0f0f0] pr-[15px]">
            <span className="flex w-[18px] justify-center">
              <svg viewBox="0 0 4 6" className="h-1.5 w-1"><path d="M4 0v6L0 3z" /></svg>
            </span>
            <span className="flex h-[15px] flex-1 items-center justify-center rounded-sm border border-[#9a9a9a] bg-linear-to-b from-[#f6f6f6] to-[#c9c9cb]">
              <span className="h-1.5 w-2 bg-[repeating-linear-gradient(90deg,#666_0_1px,transparent_1px_3px)]" />
            </span>
            <span className="flex w-[38px] justify-end pr-[7px]">
              <svg viewBox="0 0 4 6" className="h-1.5 w-1"><path d="M0 0v6l4-3z" /></svg>
            </span>
          </div>
        </div>
        <div className="mt-0.5 flex-1 border border-[#a9a9a9] leading-[13px] whitespace-pre">
          <p>柱钢筋长度计算为负，请检查下列问题:</p>
          {hints.map((h) => (
            <p key={h}>{h}</p>
          ))}
        </div>
      </div>
    </section>
  );
}

export default function App() {
  return (
    <div className="relative flex h-screen flex-col overflow-hidden bg-[#f0f0f0] text-[12px] leading-4 text-black [font-family:'Noto_Sans','Noto_Sans_CJK_SC',sans-serif]">
      <TitleBar />
      <MenuBar />
      <MainToolbar />
      <main className="flex min-h-0 flex-1 pt-px">
        <NavPanel />
        <DrawingPanel />
        <div className="flex min-w-0 flex-1 flex-col">
          <EditToolbars />
          <Drawing />
          <StatusBar />
        </div>
      </main>
      <ErrorDialog />
    </div>
  );
}
